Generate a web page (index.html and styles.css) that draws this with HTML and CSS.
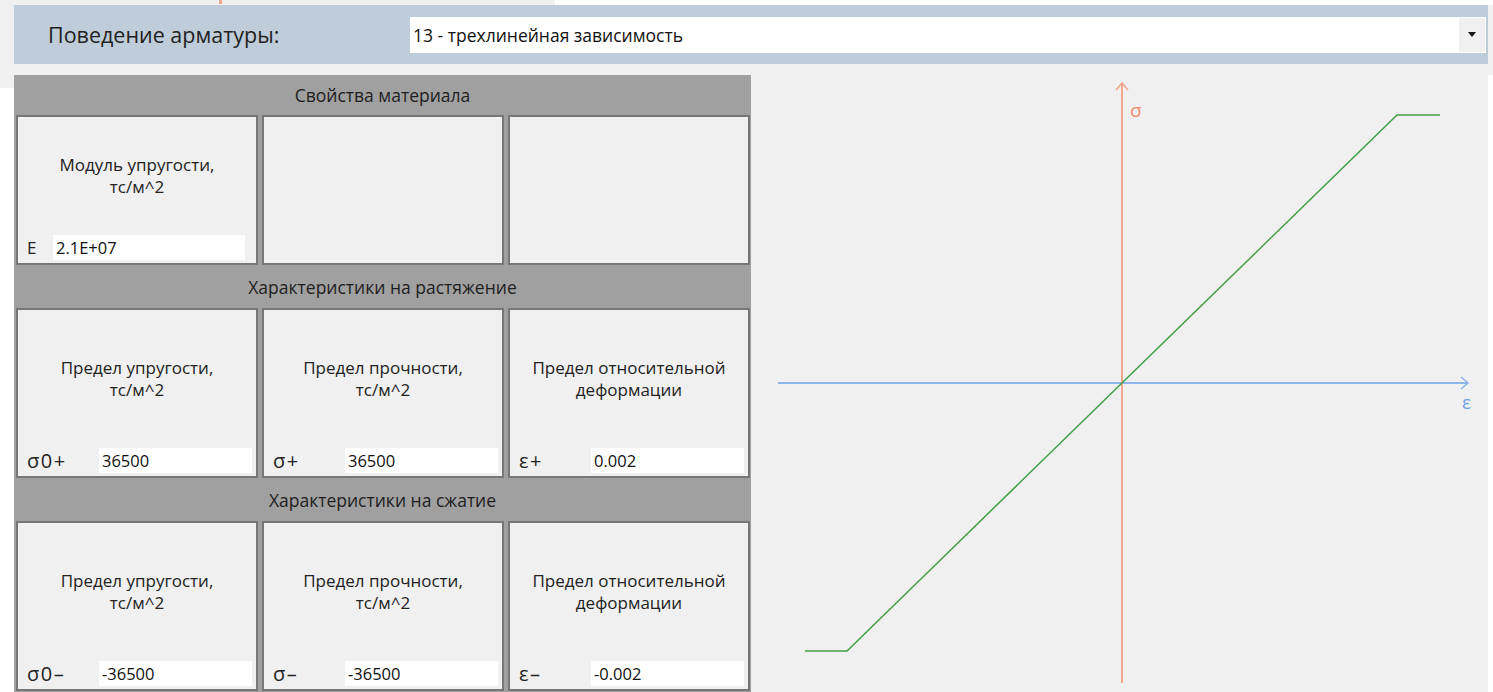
FILE: index.html
```html
<!DOCTYPE html>
<html lang="ru">
<head>
<meta charset="utf-8">
<title>Поведение арматуры</title>
<link rel="stylesheet" href="styles.css">
</head>
<body>
<div class="topstrip">
  <div class="topstrip-left"><span class="tabmark"></span></div>
  <div class="topstrip-right"></div>
</div>

<div class="toolbar">
  <div class="toolbar-label">Поведение арматуры:</div>
  <div class="select">
    <span class="select-value">13 - трехлинейная зависимость</span>
    <span class="select-btn"><span class="caret"></span></span>
  </div>
</div>

<div class="main">
  <div class="gutter"></div>

  <div class="panel">
    <div class="section-head first">Свойства материала</div>
    <div class="cells short">
      <div class="cell">
        <div class="cell-title">Модуль упругости,<br>тс/м^2</div>
        <div class="field field-e">
          <span class="field-label small">E</span>
          <span class="field-input">2.1E+07</span>
        </div>
      </div>
      <div class="cell"></div>
      <div class="cell"></div>
    </div>

    <div class="section-head">Характеристики на растяжение</div>
    <div class="cells">
      <div class="cell">
        <div class="cell-title">Предел упругости,<br>тс/м^2</div>
        <div class="field">
          <span class="field-label">σ0+</span>
          <span class="field-input">36500</span>
        </div>
      </div>
      <div class="cell">
        <div class="cell-title">Предел прочности,<br>тс/м^2</div>
        <div class="field">
          <span class="field-label">σ+</span>
          <span class="field-input">36500</span>
        </div>
      </div>
      <div class="cell">
        <div class="cell-title">Предел относительной<br>деформации</div>
        <div class="field">
          <span class="field-label">ε+</span>
          <span class="field-input">0.002</span>
        </div>
      </div>
    </div>

    <div class="section-head">Характеристики на сжатие</div>
    <div class="cells">
      <div class="cell">
        <div class="cell-title">Предел упругости,<br>тс/м^2</div>
        <div class="field">
          <span class="field-label">σ0–</span>
          <span class="field-input">-36500</span>
        </div>
      </div>
      <div class="cell">
        <div class="cell-title">Предел прочности,<br>тс/м^2</div>
        <div class="field">
          <span class="field-label">σ–</span>
          <span class="field-input">-36500</span>
        </div>
      </div>
      <div class="cell">
        <div class="cell-title">Предел относительной<br>деформации</div>
        <div class="field">
          <span class="field-label">ε–</span>
          <span class="field-input">-0.002</span>
        </div>
      </div>
    </div>
  </div>

  <div class="chart">
    <svg class="chart-svg" width="737" height="617" viewBox="0 0 737 617">
      <!-- strain axis -->
      <line x1="27" y1="308" x2="717" y2="308" class="axis-e"/>
      <polyline points="710,302 717,308 710,314" class="axis-e arrow"/>
      <text x="711" y="334" class="label-e">ε</text>
      <!-- stress axis -->
      <line x1="371" y1="608" x2="371" y2="8" class="axis-s"/>
      <polyline points="365,15 371,8 377,15" class="axis-s arrow"/>
      <text x="379" y="42" class="label-s">σ</text>
      <!-- trilinear diagram -->
      <polyline points="54,576 96,576 646,40 689,40" class="curve"/>
    </svg>
  </div>

  <div class="edge"></div>
</div>
</body>
</html>
```

FILE: styles.css
```css
html, body {
  margin: 0;
  padding: 0;
}

body {
  width: 1493px;
  height: 692px;
  overflow: hidden;
  background: #f0f0f0;
  font-family: "Open Sans", "Noto Sans", sans-serif;
  color: #222;
}

/* thin strip above the toolbar */
.topstrip {
  display: flex;
  height: 5px;
}
.topstrip-left {
  width: 555px;
  background: #f0f0f0;
  position: relative;
}
.topstrip-right {
  flex: 1;
  background: #ffffff;
}
.tabmark {
  position: absolute;
  left: 219px;
  top: 0;
  width: 3px;
  height: 4px;
  background: #f0a88e;
}

/* toolbar with the behaviour selector */
.toolbar {
  margin-left: 14px;
  width: 1474px;
  height: 59px;
  background: #bfcdda;
  display: flex;
  align-items: center;
}
.toolbar-label {
  width: 362px;
  padding-left: 34px;
  font-size: 21.5px;
  color: #222;
}
.select {
  flex: 1;
  margin-right: 2px;
  height: 36px;
  background: #ffffff;
  display: flex;
  align-items: center;
  justify-content: space-between;
}
.select-value {
  padding-left: 3px;
  font-size: 17.5px;
  color: #111;
}
.select-btn {
  width: 26px;
  height: 34px;
  margin-right: 1px;
  background: #f0f0f0;
  display: flex;
  align-items: center;
  justify-content: center;
}
.caret {
  width: 0;
  height: 0;
  border-left: 4px solid transparent;
  border-right: 4px solid transparent;
  border-top: 5px solid #111;
}

/* working area */
.main {
  margin-top: 11px;
  display: flex;
  height: 617px;
}
.gutter {
  width: 14px;
  margin-top: 13px;
  background: #ffffff;
}
.edge {
  width: 5px;
  background: #ffffff;
}

/* material properties table */
.panel {
  width: 737px;
  background: #a0a0a0;
  display: flex;
  flex-direction: column;
}
.section-head {
  height: 43px;
  display: flex;
  align-items: center;
  justify-content: center;
  font-size: 17.5px;
  color: #1e1e1e;
}
.section-head.first {
  height: 40px;
}
.cells {
  display: grid;
  grid-template-columns: 242px 242px 242px;
  column-gap: 4px;
  padding: 0 2px;
  height: 170px;
}
.cells.short {
  height: 150px;
}
.cell {
  box-sizing: border-box;
  border: 2px solid #777;
  background: #f0f0f0;
  display: flex;
  flex-direction: column;
}
.cell-title {
  flex: 1;
  display: flex;
  align-items: center;
  justify-content: center;
  text-align: center;
  font-size: 17px;
  line-height: 22px;
  color: #222;
}
.field {
  display: flex;
  align-items: center;
  height: 25px;
  margin: 0 4px 3px 0;
}
.field-e {
  margin-right: 11px;
}
.field-label {
  width: 81px;
  padding-left: 9px;
  box-sizing: border-box;
  font-size: 20px;
  letter-spacing: 1.5px;
  color: #222;
}
.field-label.small {
  width: 35px;
  font-size: 17px;
  letter-spacing: 0;
}
.field-input {
  flex: 1;
  height: 25px;
  line-height: 25px;
  background: #ffffff;
  padding-left: 3px;
  font-size: 16.5px;
  color: #111;
}

/* stress–strain diagram */
.chart {
  flex: 1;
}
.chart-svg {
  display: block;
}
.axis-e {
  stroke: #8db6ee;
  stroke-width: 2;
  fill: none;
}
.axis-s {
  stroke: #f2a88e;
  stroke-width: 2;
  fill: none;
}
.arrow {
  stroke-width: 1.5;
}
.curve {
  stroke: #43a047;
  stroke-width: 1.5;
  fill: none;
}
.label-s {
  font-family: "Open Sans", "Noto Sans", sans-serif;
  font-size: 19px;
  fill: #f08a6c;
}
.label-e {
  font-family: "Open Sans", "Noto Sans", sans-serif;
  font-size: 19px;
  fill: #6e9fe6;
}
```
